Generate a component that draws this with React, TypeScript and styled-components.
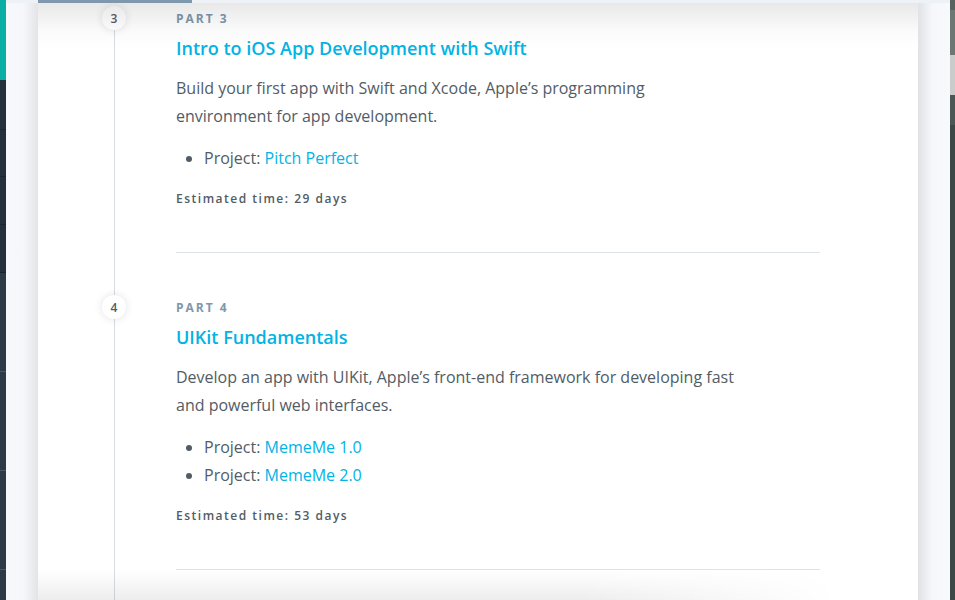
import React from "react";
import styled, { createGlobalStyle } from "styled-components";

const Global = createGlobalStyle`
  html, body { margin: 0; padding: 0; height: 100%; overflow: hidden; }
  body { font-family: "Open Sans", "Liberation Sans", sans-serif; background: #f7f9fc; }
  #root { height: 100%; }
`;

const Page = styled.div`
  display: flex;
  height: 600px;
  width: 955px;
  overflow: hidden;
`;

const SideNav = styled.nav`
  width: 6px;
  flex: 0 0 6px;
  display: flex;
  flex-direction: column;
  background: #2c3a46;
`;

const NavSeg = styled.div<{ $h: number; $bg: string; $line?: string }>`
  height: ${(p) => p.$h}px;
  flex: 0 0 ${(p) => p.$h}px;
  background: ${(p) => p.$bg};
  border-bottom: ${(p) => (p.$line ? `1px solid ${p.$line}` : "none")};
  box-sizing: border-box;
`;

const Center = styled.div`
  flex: 1;
  display: flex;
  flex-direction: column;
  min-width: 0;
`;

const TopBar = styled.div`
  height: 3px;
  flex: 0 0 3px;
  background: #eef1f6;
  display: flex;
  padding-left: 32px;
`;

const Progress = styled.div`
  width: 154px;
  background: #7f98ad;
`;

const Body = styled.div`
  flex: 1;
  display: flex;
  min-height: 0;
`;

const Gutter = styled.div<{ $side: "left" | "right" }>`
  width: 32px;
  flex: 0 0 32px;
  background: ${(p) =>
    p.$side === "left"
      ? "linear-gradient(to right, #f7f9fc 0%, #f5f7fa 55%, #e2e4e8 100%)"
      : "linear-gradient(to left, #f7f9fc 0%, #f5f7fa 55%, #e0e2e6 100%)"};
`;

const Card = styled.main`
  position: relative;
  width: 880px;
  flex: 0 0 880px;
  background: #ffffff;
  overflow: hidden;
  padding-top: 4px;
  box-sizing: border-box;

  &::before {
    content: "";
    position: absolute;
    left: 0;
    right: 0;
    top: 0;
    height: 46px;
    background: linear-gradient(to bottom, rgba(0, 0, 0, 0.09), rgba(0, 0, 0, 0.02) 60%, rgba(0, 0, 0, 0));
    pointer-events: none;
    z-index: 2;
  }

  &::after {
    content: "";
    position: absolute;
    left: 0;
    width: 800px;
    bottom: 0;
    height: 30px;
    background: linear-gradient(to top, rgba(0, 0, 0, 0.07), rgba(0, 0, 0, 0.02) 70%, rgba(0, 0, 0, 0));
    -webkit-mask-image: linear-gradient(to right, #000 0%, #000 68%, transparent 100%);
    mask-image: linear-gradient(to right, #000 0%, #000 68%, transparent 100%);
    pointer-events: none;
    z-index: 2;
  }
`;

const Part = styled.section`
  display: grid;
  grid-template-columns: 138px 644px;
`;

const Rail = styled.div`
  background: linear-gradient(#d6dde5, #d6dde5) no-repeat 76px 0 / 1px 100%;
  padding-left: 64px;
`;

const Dot = styled.div`
  width: 24px;
  height: 24px;
  margin-top: -1px;
  border-radius: 50%;
  background: #fff;
  box-shadow: 0 0 8px rgba(0, 0, 0, 0.12);
  display: flex;
  align-items: center;
  justify-content: center;
  font-size: 12px;
  font-weight: 600;
  color: #525c65;
  position: relative;
  z-index: 1;
`;

const Content = styled.div`
  display: flex;
  flex-direction: column;
  padding-bottom: 43px;
`;

const Label = styled.div`
  font-size: 12px;
  line-height: 24px;
  font-weight: 700;
  letter-spacing: 2px;
  color: #7d97ad;
  text-transform: uppercase;
`;

const Title = styled.h2`
  margin: 4px 0 0;
  font-size: 18px;
  line-height: 26px;
  font-weight: 600;
  color: #02b3e4;
`;

const Desc = styled.p`
  margin: 13px 0 0;
  font-size: 16px;
  line-height: 28px;
  color: #525c65;
  max-width: 562px;
`;

const Projects = styled.ul`
  margin: 14px 0 0;
  padding-left: 28px;
  list-style: disc;
  color: #525c65;
`;

const Project = styled.li`
  font-size: 16px;
  line-height: 28px;
  &::marker { color: #525c65; }
`;

const Link = styled.a`
  color: #02b3e4;
  text-decoration: none;
`;

const Estimate = styled.div`
  margin-top: 19px;
  font-size: 12px;
  line-height: 16px;
  font-weight: 600;
  letter-spacing: 1.5px;
  color: #525c65;
`;

const Divider = styled.hr`
  margin: 45px 0 0;
  border: none;
  height: 1px;
  background: #dde3e9;
`;

const RightStrip = styled.div`
  width: 5px;
  flex: 0 0 5px;
  display: flex;
  flex-direction: column;
  background: #3b4846;
  overflow: hidden;
`;

const StripBit = styled.div<{ $h: number; $bg: string }>`
  height: ${(p) => p.$h}px;
  flex: 0 0 ${(p) => p.$h}px;
  background: ${(p) => p.$bg};
`;

type PartData = {
  n: number;
  title: string;
  desc: string;
  projects: string[];
  days: number;
};

const parts: PartData[] = [
  {
    n: 3,
    title: "Intro to iOS App Development with Swift",
    desc: "Build your first app with Swift and Xcode, Apple’s programming environment for app development.",
    projects: ["Pitch Perfect"],
    days: 29,
  },
  {
    n: 4,
    title: "UIKit Fundamentals",
    desc: "Develop an app with UIKit, Apple’s front-end framework for developing fast and powerful web interfaces.",
    projects: ["MemeMe 1.0", "MemeMe 2.0"],
    days: 53,
  },
];

export default function App() {
  return (
    <>
      <Global />
      <Page>
        <SideNav>
          <NavSeg $h={80} $bg="#0aaea5" />
          <NavSeg $h={50} $bg="#24313c" $line="#1b262f" />
          <NavSeg $h={47} $bg="#24313c" $line="#1b262f" />
          <NavSeg $h={48} $bg="#24313c" $line="#1b262f" />
          <NavSeg $h={48} $bg="#24313c" $line="#19232b" />
          <NavSeg $h={99} $bg="#2c3b47" $line="#4a5965" />
          <NavSeg $h={99} $bg="#2c3b47" $line="#4a5965" />
          <NavSeg $h={99} $bg="#2c3b47" $line="#4a5965" />
          <NavSeg $h={30} $bg="#2c3b47" />
        </SideNav>
        <Center>
          <TopBar>
            <Progress />
          </TopBar>
          <Body>
            <Gutter $side="left" />
            <Card>
              {parts.map((p) => (
                <Part key={p.n}>
                  <Rail>
                    <Dot>{p.n}</Dot>
                  </Rail>
                  <Content>
                    <Label>Part {p.n}</Label>
                    <Title>{p.title}</Title>
                    <Desc>{p.desc}</Desc>
                    <Projects>
                      {p.projects.map((pr) => (
                        <Project key={pr}>
                          Project: <Link href="#">{pr}</Link>
                        </Project>
                      ))}
                    </Projects>
                    <Estimate>Estimated time: {p.days} days</Estimate>
                    <Divider />
                  </Content>
                </Part>
              ))}
            </Card>
            <Gutter $side="right" />
          </Body>
        </Center>
        <RightStrip>
          <StripBit $h={10} $bg="#56625e" />
          <StripBit $h={45} $bg="#6b7773" />
          <StripBit $h={40} $bg="#c9cccb" />
          <StripBit $h={30} $bg="#4a5754" />
          <StripBit $h={475} $bg="#3b4846" />
        </RightStrip>
      </Page>
    </>
  );
}
